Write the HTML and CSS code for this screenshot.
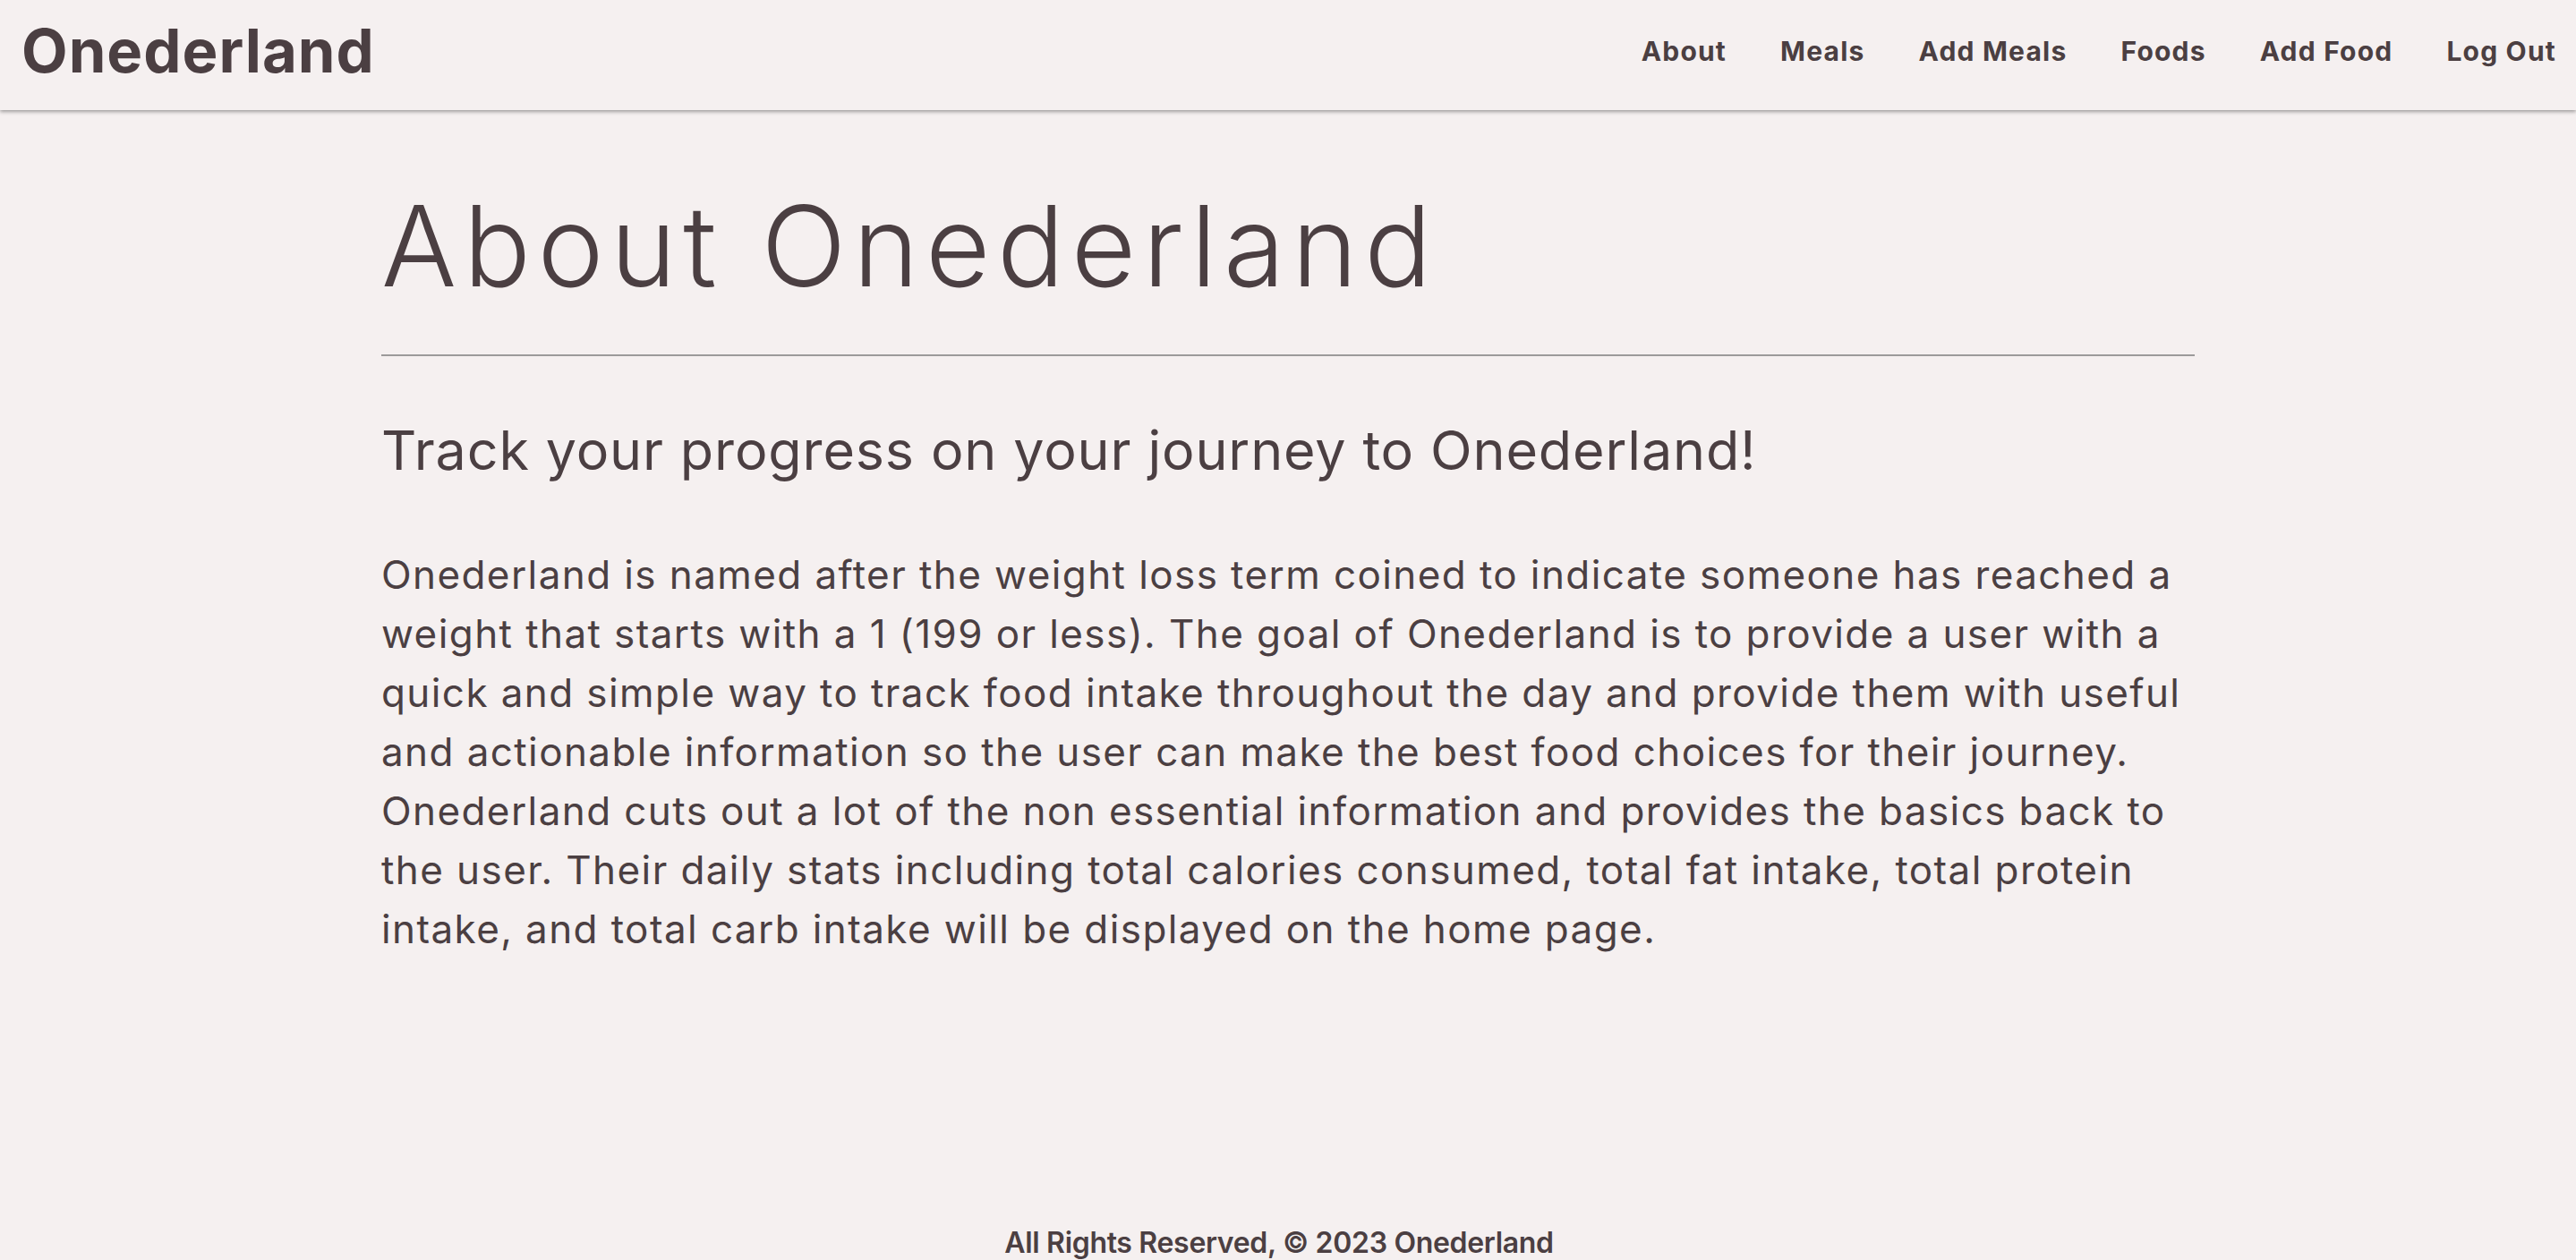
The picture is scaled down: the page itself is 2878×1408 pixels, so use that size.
FILE: index.html
```html
<!DOCTYPE html>
<html lang="en">
<head>
<meta charset="utf-8">
<title>About Onederland</title>
<link rel="stylesheet" href="styles.css">
</head>
<body>
<header class="topbar">
  <a class="brand" href="#">Onederland</a>
  <nav class="nav">
    <a class="nav-link" href="#">About</a>
    <a class="nav-link" href="#">Meals</a>
    <a class="nav-link" href="#">Add Meals</a>
    <a class="nav-link" href="#">Foods</a>
    <a class="nav-link" href="#">Add Food</a>
    <a class="nav-link" href="#">Log Out</a>
  </nav>
</header>
<main class="content">
  <h1 class="title">About Onederland</h1>
  <hr class="rule">
  <h2 class="subtitle">Track your progress on your journey to Onederland!</h2>
  <p class="lead">Onederland is named after the weight loss term coined to indicate someone has reached a weight that starts with a 1 (199 or less). The goal of Onederland is to provide a user with a quick and simple way to track food intake throughout the day and provide them with useful and actionable information so the user can make the best food choices for their journey. Onederland cuts out a lot of the non essential information and provides the basics back to the user. Their daily stats including total calories consumed, total fat intake, total protein intake, and total carb intake will be displayed on the home page.</p>
</main>
<footer class="footer">All Rights Reserved, © 2023 Onederland</footer>
</body>
</html>
```
FILE: styles.css
```css
html, body {
  margin: 0;
  padding: 0;
}
body {
  background: #f5f0f0;
  color: #4b3f42;
  font-family: Inter, "Open Sans", sans-serif;
  min-height: 100vh;
  display: flex;
  flex-direction: column;
}
a {
  color: inherit;
  text-decoration: none;
}
.topbar {
  height: 123px;
  box-sizing: border-box;
  display: flex;
  align-items: center;
  justify-content: space-between;
  padding: 0 22px 10px 24px;
  box-shadow: 0 2px 4px rgba(0, 0, 0, 0.35);
}
.brand {
  font-size: 67px;
  font-weight: 700;
  letter-spacing: 0.015em;
}
.nav {
  display: flex;
  gap: 60px;
}
.nav-link {
  font-size: 30px;
  font-weight: 700;
  letter-spacing: 0.04em;
}
.content {
  flex: 1;
  width: 2026px;
  margin: 0 auto;
}
.title {
  margin: 77px 0 0 0;
  font-size: 125px;
  line-height: 150px;
  font-weight: 300;
  letter-spacing: 0.06em;
}
.rule {
  margin: 46px 0 0 0;
  border: 0;
  border-top: 2px solid #9c9a9a;
}
.subtitle {
  margin: 69px 0 0 0;
  font-size: 61px;
  line-height: 73px;
  font-weight: 400;
  letter-spacing: 0.014em;
}
.lead {
  margin: 69px 0 0 0;
  font-size: 44px;
  line-height: 66px;
  font-weight: 400;
  letter-spacing: 0.032em;
}
.footer {
  text-align: center;
  font-size: 32px;
  line-height: 39px;
  font-weight: 600;
  letter-spacing: -0.01em;
  padding-right: 20px;
}
```
